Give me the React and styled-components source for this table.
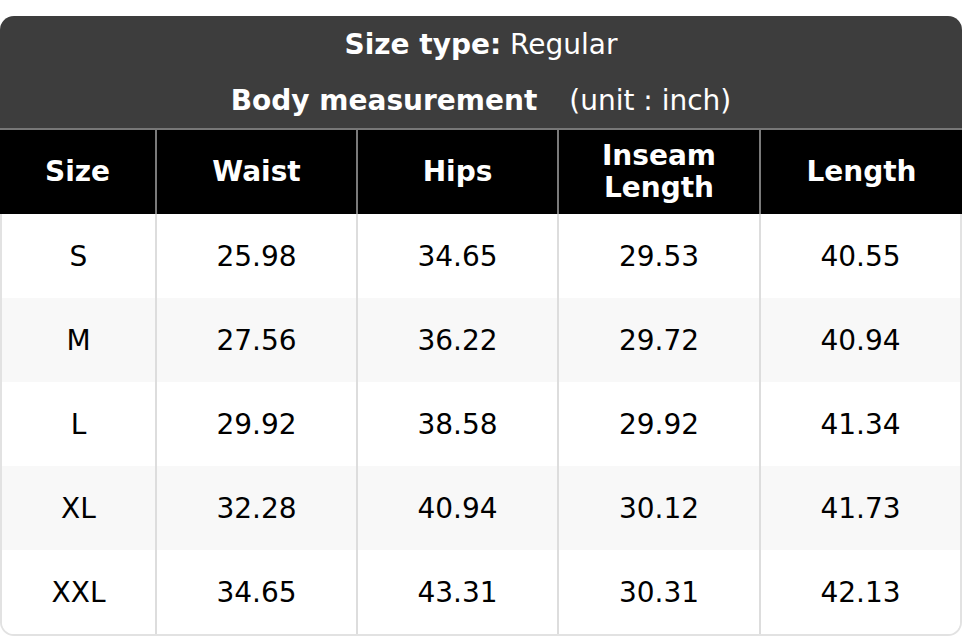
import React from "react";
import styled, { createGlobalStyle } from "styled-components";

const rows = [
  ["S", "25.98", "34.65", "29.53", "40.55"],
  ["M", "27.56", "36.22", "29.72", "40.94"],
  ["L", "29.92", "38.58", "29.92", "41.34"],
  ["XL", "32.28", "40.94", "30.12", "41.73"],
  ["XXL", "34.65", "43.31", "30.31", "42.13"],
];

const columns = ["Size", "Waist", "Hips", ["Inseam", "Length"], "Length"];

export default function App() {
  return (
    <>
      <GlobalStyle />
      <Chart>
        <Banner>
          <BannerLine>
            <b>Size type:</b> Regular
          </BannerLine>
          <BannerLine>
            <b>Body measurement</b>
            <Unit>(unit : inch)</Unit>
          </BannerLine>
        </Banner>
        <HeadRow>
          {columns.map((c, i) => (
            <HeadCell key={i}>
              {Array.isArray(c) ? (
                <span>
                  {c[0]}
                  <br />
                  {c[1]}
                </span>
              ) : (
                c
              )}
            </HeadCell>
          ))}
        </HeadRow>
        <Body>
          {rows.map((r, i) => (
            <DataRow key={r[0]} $striped={i % 2 === 1}>
              {r.map((v, j) => (
                <DataCell key={j}>{v}</DataCell>
              ))}
            </DataRow>
          ))}
        </Body>
      </Chart>
    </>
  );
}

const GlobalStyle = createGlobalStyle`
  body {
    margin: 0;
    background: #fff;
    font-family: "DejaVu Sans", Verdana, sans-serif;
  }
`;

const Chart = styled.div`
  margin-top: 16px;
  width: 962px;
  font-size: 28px;
`;

const Banner = styled.div`
  background: #3d3d3d;
  color: #fff;
  border-radius: 14px 14px 0 0;
  border-bottom: 2px solid #777;
`;

const BannerLine = styled.div`
  height: 56px;
  display: flex;
  align-items: center;
  justify-content: center;
  white-space: pre;
  b {
    font-weight: bold;
  }
`;

const Unit = styled.span`
  margin-left: 32px;
`;

const grid = `
  display: grid;
  grid-template-columns: 155px 201px 201px 202px 1fr;
`;

const HeadRow = styled.div`
  ${grid}
  background: #000;
  color: #fff;
  height: 84px;
`;

const HeadCell = styled.div`
  display: flex;
  align-items: center;
  justify-content: center;
  text-align: center;
  font-weight: bold;
  line-height: 32px;
  & + & {
    border-left: 2px solid #7a7a7a;
  }
`;

const Body = styled.div`
  border: 2px solid #e2e2e2;
  border-top: none;
  border-radius: 0 0 14px 14px;
  overflow: hidden;
  margin-top: 0;
`;

const DataRow = styled.div`
  ${grid}
  grid-template-columns: 153px 201px 201px 202px 1fr;
  height: 84px;
  background: ${(p) => (p.$striped ? "#f8f8f8" : "#fff")};
  color: #000;
`;

const DataCell = styled.div`
  display: flex;
  align-items: center;
  justify-content: center;
  & + & {
    border-left: 2px solid #dddddd;
  }
`;
